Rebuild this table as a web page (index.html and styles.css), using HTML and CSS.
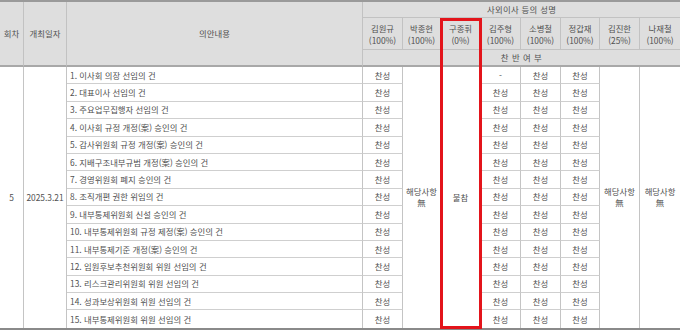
FILE: index.html
```html
<!DOCTYPE html>
<html lang="ko">
<head>
<meta charset="utf-8">
<link rel="stylesheet" href="styles.css">
</head>
<body>
<div class="wrap">
<table class="board">
<colgroup>
<col class="c-no"><col class="c-date"><col class="c-agenda">
<col class="c-m"><col class="c-m2"><col class="c-m"><col class="c-m"><col class="c-m"><col class="c-m3"><col class="c-m"><col class="c-m">
</colgroup>
<thead>
<tr class="h1">
<th rowspan="3">회차</th>
<th rowspan="3">개최일자</th>
<th rowspan="3">의안내용</th>
<th colspan="8" class="spread">사외이사 등의 성명</th>
</tr>
<tr class="h2">
<th>김원규<br>(100%)</th>
<th>박종현<br>(100%)</th>
<th>구종휘<br>(0%)</th>
<th>김주형<br>(100%)</th>
<th>소병철<br>(100%)</th>
<th>정갑재<br>(100%)</th>
<th>김진한<br>(25%)</th>
<th>나재철<br>(100%)</th>
</tr>
<tr class="h3">
<th colspan="8" class="vote">찬 반 여 부</th>
</tr>
</thead>
<tbody>
<tr>
<td rowspan="15">5</td>
<td rowspan="15">2025.3.21</td>
<td class="agenda">1. 이사회 의장 선임의 건</td>
<td>찬성</td>
<td rowspan="15">해당사항<br>無</td>
<td rowspan="15">불참</td>
<td>-</td><td>찬성</td><td>찬성</td>
<td rowspan="15">해당사항<br>無</td>
<td rowspan="15" class="last">해당사항<br>無</td>
</tr>
<tr><td class="agenda">2. 대표이사 선임의 건</td><td>찬성</td><td>찬성</td><td>찬성</td><td>찬성</td></tr>
<tr><td class="agenda">3. 주요업무집행자 선임의 건</td><td>찬성</td><td>찬성</td><td>찬성</td><td>찬성</td></tr>
<tr><td class="agenda">4. 이사회 규정 개정(案) 승인의 건</td><td>찬성</td><td>찬성</td><td>찬성</td><td>찬성</td></tr>
<tr><td class="agenda">5. 감사위원회 규정 개정(案) 승인의 건</td><td>찬성</td><td>찬성</td><td>찬성</td><td>찬성</td></tr>
<tr><td class="agenda">6. 지배구조내부규범 개정(案) 승인의 건</td><td>찬성</td><td>찬성</td><td>찬성</td><td>찬성</td></tr>
<tr><td class="agenda">7. 경영위원회 폐지 승인의 건</td><td>찬성</td><td>찬성</td><td>찬성</td><td>찬성</td></tr>
<tr><td class="agenda">8. 조직개편 권한 위임의 건</td><td>찬성</td><td>찬성</td><td>찬성</td><td>찬성</td></tr>
<tr><td class="agenda">9. 내부통제위원회 신설 승인의 건</td><td>찬성</td><td>찬성</td><td>찬성</td><td>찬성</td></tr>
<tr><td class="agenda">10. 내부통제위원회 규정 제정(案) 승인의 건</td><td>찬성</td><td>찬성</td><td>찬성</td><td>찬성</td></tr>
<tr><td class="agenda">11. 내부통제기준 개정(案) 승인의 건</td><td>찬성</td><td>찬성</td><td>찬성</td><td>찬성</td></tr>
<tr><td class="agenda">12. 임원후보추천위원회 위원 선임의 건</td><td>찬성</td><td>찬성</td><td>찬성</td><td>찬성</td></tr>
<tr><td class="agenda">13. 리스크관리위원회 위원 선임의 건</td><td>찬성</td><td>찬성</td><td>찬성</td><td>찬성</td></tr>
<tr><td class="agenda">14. 성과보상위원회 위원 선임의 건</td><td>찬성</td><td>찬성</td><td>찬성</td><td>찬성</td></tr>
<tr><td class="agenda">15. 내부통제위원회 위원 선임의 건</td><td>찬성</td><td>찬성</td><td>찬성</td><td>찬성</td></tr>
</tbody>
</table>
<div class="highlight"></div>
</div>
</body>
</html>
```
FILE: styles.css
```css
html, body {
  margin: 0;
  padding: 0;
  background: #ffffff;
}
.wrap {
  position: relative;
  width: 680px;
  height: 330px;
  overflow: hidden;
}
.board {
  width: 680px;
  table-layout: fixed;
  border-collapse: separate;
  border-spacing: 0;
  font-family: "Noto Sans CJK KR", "Noto Sans", sans-serif;
  font-size: 8.4px;
  color: #505050;
  border-top: 2px solid #9a9a9a;
  border-bottom: 2px solid #8a8a8a;
}
.c-no { width: 24px; }
.c-date { width: 43px; }
.c-agenda { width: 296px; }
.c-m { width: 40px; }
.c-m2 { width: 38px; }
.c-m3 { width: 39px; }
th, td {
  box-sizing: border-box;
  padding: 0;
  text-align: center;
  vertical-align: middle;
  font-weight: normal;
  border-right: 1px solid #c4c4c4;
  border-bottom: 1px solid #cfcfcf;
  line-height: 11px;
  white-space: nowrap;
}
th {
  background: #dedede;
  border-right-color: #c2c2c2;
  border-bottom-color: #c2c2c2;
}
.h1 th { height: 16px; }
.h1 th[rowspan] { border-bottom: 2px solid #a8a8a8; }
.h2 th { height: 32px; line-height: 12px; }
.h3 th { height: 17px; border-bottom: 2px solid #a8a8a8; }
.spread { letter-spacing: 0.3px; }
.vote { letter-spacing: 0.5px; }
th:last-child, td.last { border-right: none; }
tbody tr { height: 17.4px; }
tbody td { height: 17.4px; }
tbody tr:last-child td { border-bottom: none; }
tbody td[rowspan] { border-bottom: none; }
.agenda {
  text-align: left;
  padding-left: 3px;
}
.highlight {
  position: absolute;
  left: 440px;
  top: 18px;
  width: 42px;
  height: 311px;
  box-sizing: border-box;
  border: 3px solid #e3141b;
}
```
